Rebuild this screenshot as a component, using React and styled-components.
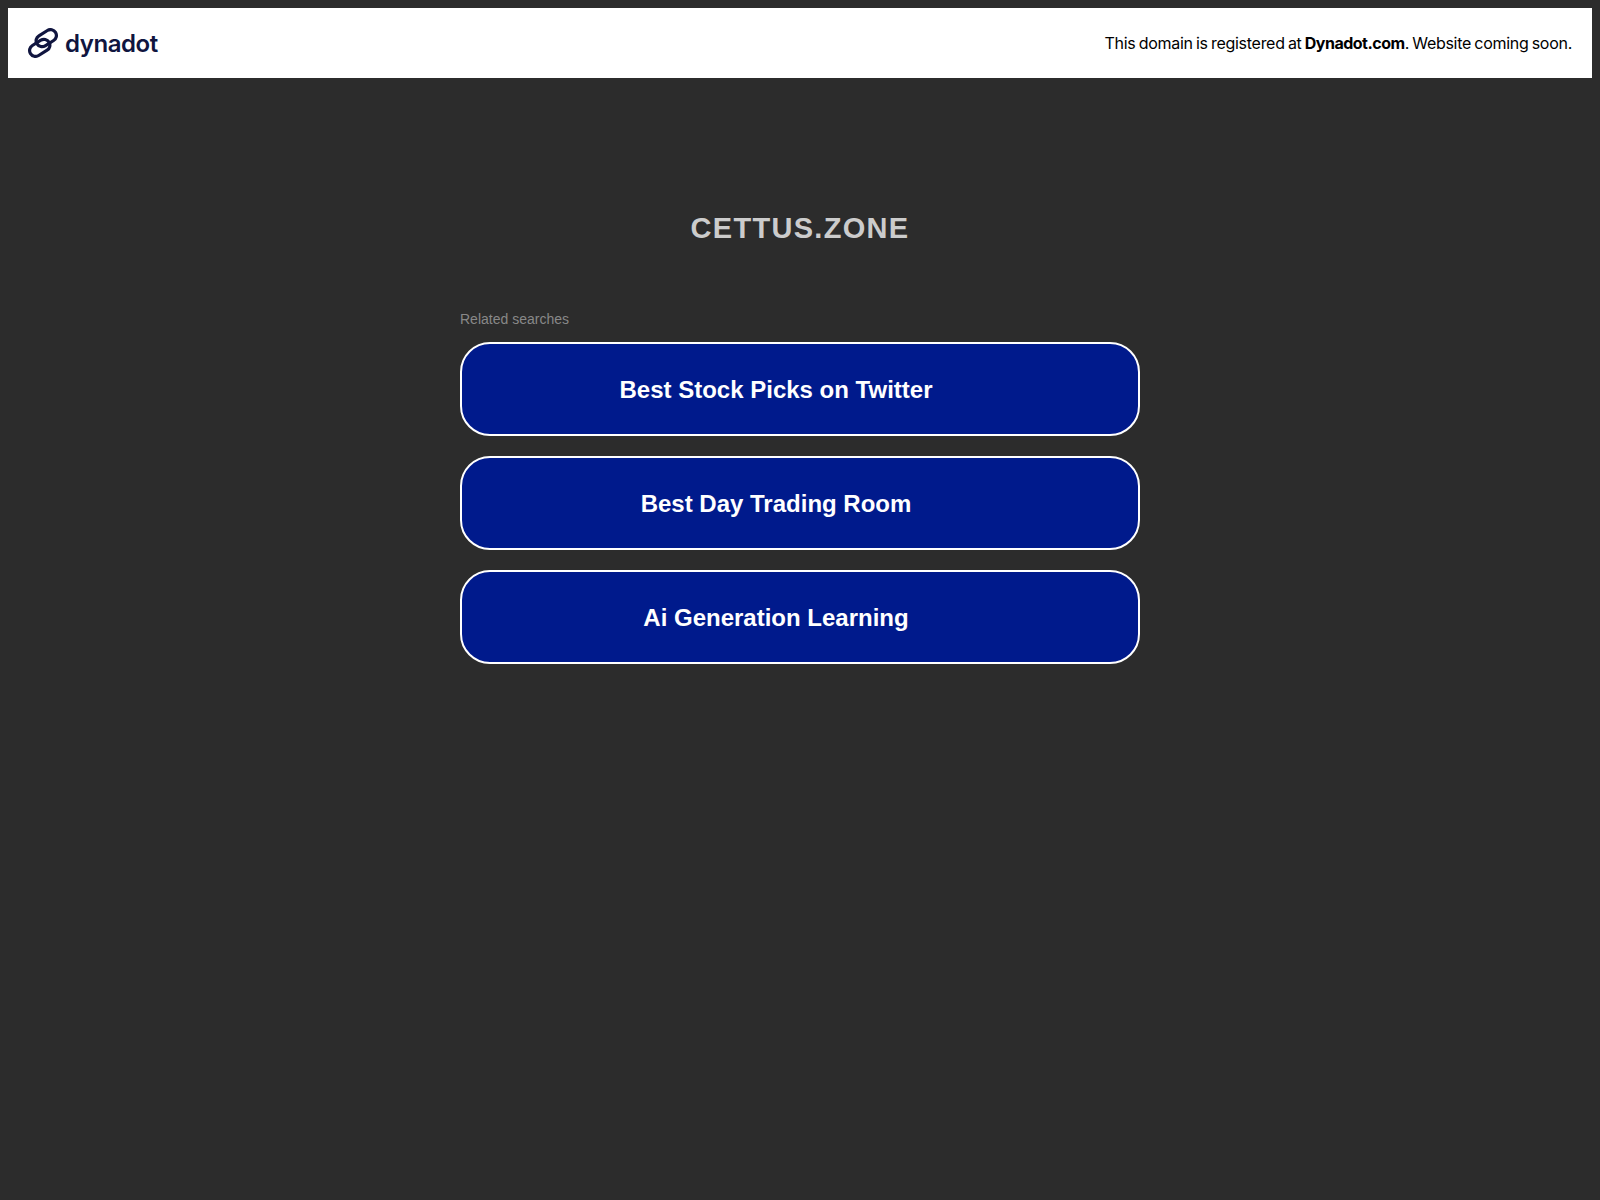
import React from "react";
import styled, { createGlobalStyle } from "styled-components";

const Global = createGlobalStyle`
  html, body { background: #2c2c2c; }
  body { margin: 8px; font-family: "Liberation Sans", Arial, sans-serif; }
`;

const TopBar = styled.header`
  height: 70px;
  background: #fff;
  display: flex;
  align-items: center;
  justify-content: space-between;
  padding: 0 20px;
`;

const Logo = styled.div`
  display: flex;
  align-items: center;
  gap: 7px;
  color: #10153f;
  font-family: Inter, sans-serif;
  font-weight: 600;
  font-size: 24px;
  letter-spacing: -0.45px;
`;

const Note = styled.div`
  font-family: Inter, sans-serif;
  font-size: 16px;
  letter-spacing: -0.28px;
  word-spacing: -1px;
  color: #000;
  b { font-weight: 700; letter-spacing: -0.5px; }
`;

const Main = styled.main`
  width: 680px;
  margin: 0 auto;
  display: flex;
  flex-direction: column;
`;

const Title = styled.h1`
  margin: 132px 0 0;
  text-align: center;
  font-size: 29px;
  line-height: 36px;
  font-weight: 700;
  letter-spacing: 1.3px;
  color: #ccc;
`;

const Label = styled.div`
  margin-top: 64px;
  font-size: 14px;
  line-height: 18px;
  color: #888;
`;

const Result = styled.a`
  box-sizing: border-box;
  height: 94px;
  margin-top: ${p => (p.$first ? "14px" : "20px")};
  display: flex;
  align-items: center;
  justify-content: center;
  padding: 2px 48px 0 0;
  background: #001a8c;
  border: 2px solid #fff;
  border-radius: 30px;
  color: #fff;
  font-size: 24px;
  font-weight: 700;
  text-decoration: none;
`;

const searches = ["Best Stock Picks on Twitter", "Best Day Trading Room", "Ai Generation Learning"];

export default function App() {
  return (
    <>
      <Global />
      <TopBar>
        <Logo>
          <svg width="30" height="30" viewBox="0 0 30 30" fill="none" stroke="#10153f" strokeWidth="3.2">
            <rect x="7.36" y="4.25" width="21.8" height="11.8" rx="5.9" transform="rotate(-32 18.26 10.15)" />
            <rect x="0.84" y="13.95" width="21.8" height="11.8" rx="5.9" transform="rotate(-32 11.74 19.85)" />
          </svg>
          dynadot
        </Logo>
        <Note>This domain is registered at <b>Dynadot.com</b>. Website coming soon.</Note>
      </TopBar>
      <Main>
        <Title>CETTUS.ZONE</Title>
        <Label>Related searches</Label>
        {searches.map((s, i) => (
          <Result key={s} href="#" $first={i === 0}>{s}</Result>
        ))}
      </Main>
    </>
  );
}
